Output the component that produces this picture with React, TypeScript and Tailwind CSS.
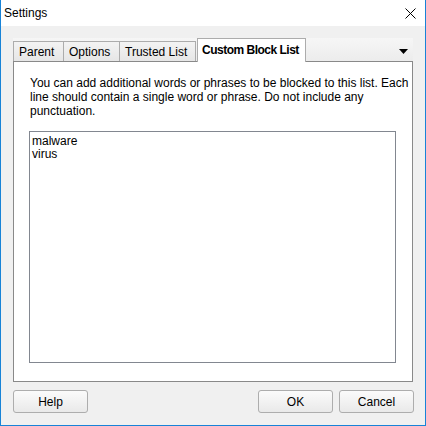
import React from "react";

function Btn({ children, className = "" }: { children: React.ReactNode; className?: string }) {
  return (
    <div
      className={
        "flex h-[23px] w-[75px] items-center justify-center rounded-[3px] border border-[#adadad] bg-gradient-to-b from-[#fbfbfb] to-[#e9e9e9] text-[12px] text-black " +
        className
      }
    >
      {children}
    </div>
  );
}

export default function App() {
  return (
    <div
      className="flex h-[426px] w-[426px] flex-col border-b border-l border-r border-[#1883d7] bg-white"
      style={{ fontFamily: '"Liberation Sans", Arial, sans-serif' }}
    >
      {/* Title bar */}
      <div className="flex h-[26px] shrink-0 items-center justify-between bg-white pl-[3px] pr-[9px]">
        <span className="text-[12px] text-black">Settings</span>
        <svg width="11" height="11" viewBox="0 0 11 11">
          <path d="M0.5 0.5 L10.5 10.5 M10.5 0.5 L0.5 10.5" stroke="#000" strokeWidth="1" fill="none" />
        </svg>
      </div>

      {/* Body */}
      <div className="flex flex-1 flex-col bg-[#f0f0f0] pl-[12px] pr-[12px] pt-[12px]">
        {/* Tab strip */}
        <div className="relative flex h-[23px] shrink-0 items-end bg-gradient-to-b from-[#f6f6f6] to-[#ececec]">
          <div className="flex h-[20px] w-[51px] items-center whitespace-nowrap border border-b-0 border-[#acacac] bg-gradient-to-b from-[#f3f3f3] to-[#e6e6e6] pl-[5px] text-[12px] text-black">
            Parent
          </div>
          <div className="-ml-px flex h-[20px] w-[57px] items-center whitespace-nowrap border border-b-0 border-[#acacac] bg-gradient-to-b from-[#f3f3f3] to-[#e6e6e6] pl-[5px] text-[12px] text-black">
            Options
          </div>
          <div className="-ml-px flex h-[20px] w-[77px] items-center whitespace-nowrap border border-b-0 border-[#acacac] bg-gradient-to-b from-[#f3f3f3] to-[#e6e6e6] pl-[5px] text-[12px] text-black">
            Trusted List
          </div>
          <div className="relative z-10 -mb-px ml-[1px] flex h-[24px] w-[109px] items-center overflow-hidden whitespace-nowrap border border-b-0 border-[#acacac] bg-white pb-[1px] pl-[4px] text-[12px] font-bold tracking-[-0.5px] text-black">
            Custom Block List
          </div>
          <div className="flex-1" />
          <div className="mb-[7px] mr-[5px]">
            <svg width="9" height="5" viewBox="0 0 9 5">
              <polygon points="0,0 9,0 4.5,5" fill="#000" />
            </svg>
          </div>
        </div>

        {/* Panel */}
        <div className="flex h-[321px] shrink-0 flex-col border border-[#898989] bg-white">
          <div className="pl-[16px] pt-[14px] text-[12px] leading-[14px] text-black">
            You can add additional words or phrases to be blocked to this list. Each
            <br />
            line should contain a single word or phrase. Do not include any
            <br />
            punctuation.
          </div>
          <div className="ml-[15px] mt-[13px] h-[232px] w-[367px] border border-[#828790] bg-white pl-[2px] pt-[3px] text-[12px] leading-[13px] text-black">
            <div>malware</div>
            <div>virus</div>
          </div>
        </div>

        {/* Buttons */}
        <div className="mr-[-1px] mt-[8px] flex items-start">
          <Btn>Help</Btn>
          <div className="flex-1" />
          <Btn>OK</Btn>
          <Btn className="ml-[6px]">Cancel</Btn>
        </div>
      </div>
    </div>
  );
}
